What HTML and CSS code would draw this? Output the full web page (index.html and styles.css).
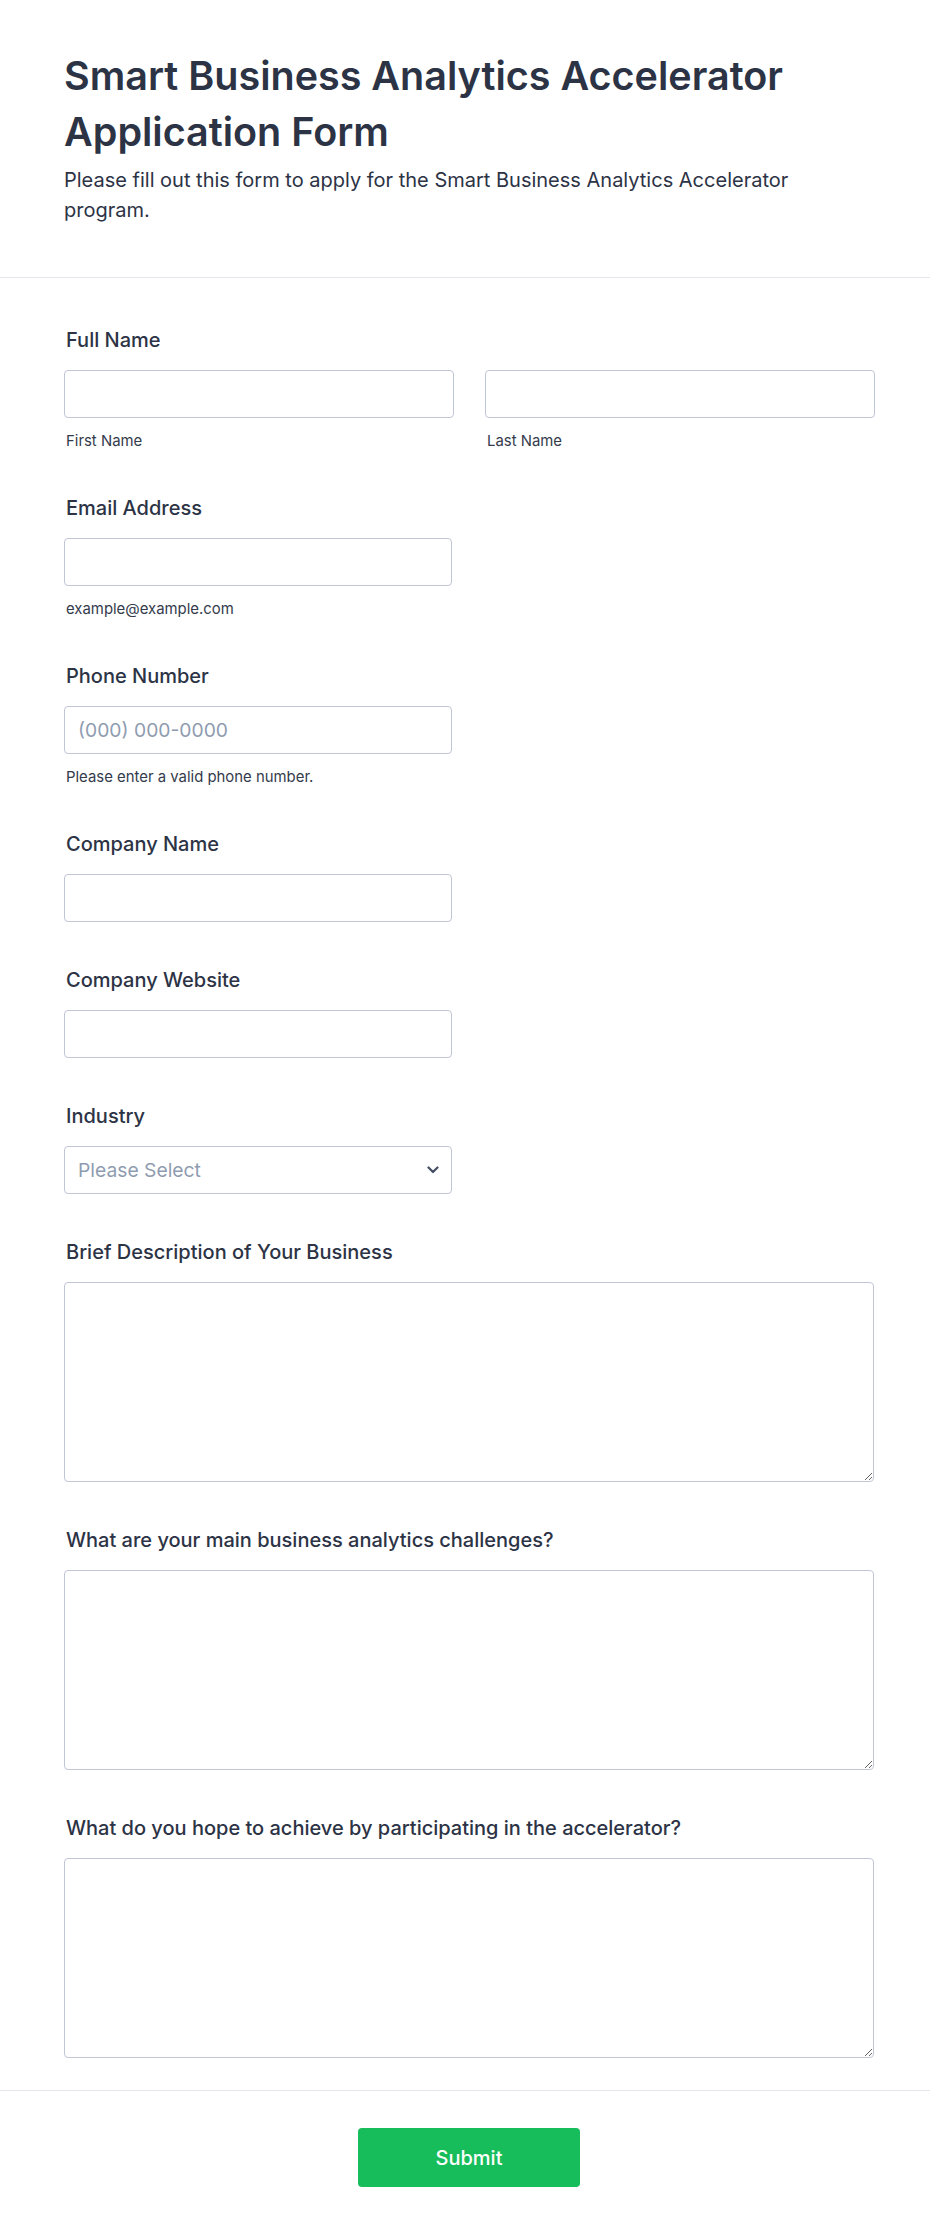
FILE: index.html
```html
<!DOCTYPE html>
<html lang="en">
<head>
<meta charset="utf-8">
<title>Smart Business Analytics Accelerator Application Form</title>
<link rel="stylesheet" href="styles.css">
</head>
<body>
<div class="page">
  <header class="header">
    <h1 class="title">Smart Business Analytics Accelerator Application Form</h1>
    <p class="subtitle">Please fill out this form to apply for the Smart Business Analytics Accelerator program.</p>
  </header>

  <form class="form">
    <div class="field">
      <label class="label">Full Name</label>
      <div class="name-grid">
        <div class="name-col">
          <input class="input" type="text">
          <span class="sublabel">First Name</span>
        </div>
        <div class="name-col">
          <input class="input" type="text">
          <span class="sublabel">Last Name</span>
        </div>
      </div>
    </div>

    <div class="field">
      <label class="label">Email Address</label>
      <input class="input input-short" type="email">
      <span class="sublabel">example@example.com</span>
    </div>

    <div class="field">
      <label class="label">Phone Number</label>
      <input class="input input-short" type="tel" placeholder="(000) 000-0000">
      <span class="sublabel">Please enter a valid phone number.</span>
    </div>

    <div class="field">
      <label class="label">Company Name</label>
      <input class="input input-short" type="text">
    </div>

    <div class="field">
      <label class="label">Company Website</label>
      <input class="input input-short" type="text">
    </div>

    <div class="field">
      <label class="label">Industry</label>
      <div class="select-wrap">
        <select class="input select">
          <option>Please Select</option>
        </select>
        <svg class="chevron" width="12" height="8" viewBox="0 0 12 8" aria-hidden="true">
          <path d="M1.5 1.5 L6 6 L10.5 1.5" fill="none" stroke="#454f63" stroke-width="2.2" stroke-linecap="round" stroke-linejoin="round"/>
        </svg>
      </div>
    </div>

    <div class="field">
      <label class="label">Brief Description of Your Business</label>
      <textarea class="input textarea"></textarea>
    </div>

    <div class="field">
      <label class="label">What are your main business analytics challenges?</label>
      <textarea class="input textarea"></textarea>
    </div>

    <div class="field">
      <label class="label">What do you hope to achieve by participating in the accelerator?</label>
      <textarea class="input textarea"></textarea>
    </div>
  </form>

  <footer class="footer">
    <button class="submit" type="button">Submit</button>
  </footer>
</div>
</body>
</html>
```

FILE: styles.css
```css
* {
  box-sizing: border-box;
}

html, body {
  margin: 0;
  padding: 0;
  background: #ffffff;
}

body {
  font-family: Inter, "Noto Sans", "DejaVu Sans", sans-serif;
  color: #2c3345;
}

.page {
  width: 930px;
}

.header {
  padding: 48px 64px 52px 64px;
  border-bottom: 1px solid #e3e6ec;
}

.title {
  margin: 0;
  max-width: 770px;
  font-size: 39.5px;
  line-height: 56px;
  font-weight: 600;
  color: #2c3345;
}

.subtitle {
  margin: 5px 0 0 0;
  max-width: 770px;
  font-size: 20px;
  line-height: 30px;
  font-weight: 400;
  color: #2c3345;
}

.form {
  width: 930px;
  padding: 32px 56px 4px 64px;
  display: flex;
  flex-direction: column;
  border-bottom: 1px solid #e3e6ec;
}

.field {
  padding: 16px 0 28px 0;
  display: flex;
  flex-direction: column;
  align-items: flex-start;
}

.label {
  display: block;
  margin: 0 0 16px 2px;
  font-size: 20px;
  line-height: 28px;
  font-weight: 500;
  color: #2c3345;
}

.name-grid {
  width: 810px;
  display: grid;
  grid-template-columns: 390px 390px;
  column-gap: 31px;
}

.name-col {
  display: flex;
  flex-direction: column;
}

.input {
  display: block;
  width: 100%;
  height: 48px;
  margin: 0;
  padding: 0 13px;
  border: 1px solid #c0c7d4;
  border-radius: 4px;
  background: #ffffff;
  font-family: Inter, "Noto Sans", sans-serif;
  font-size: 19.3px;
  color: #2c3345;
  outline: none;
}

.input::placeholder {
  color: #8f9cb0;
  opacity: 1;
}

.input-short {
  width: 388px;
}

.sublabel {
  display: block;
  margin: 14px 0 0 2px;
  font-size: 14.9px;
  line-height: 18px;
  font-weight: 400;
  color: #343b4c;
}

.select-wrap {
  position: relative;
  width: 388px;
}

.select {
  appearance: none;
  -webkit-appearance: none;
  color: #8f9cb0;
  padding-right: 40px;
}

.chevron {
  position: absolute;
  right: 13px;
  top: 20px;
  pointer-events: none;
}

.textarea {
  width: 810px;
  height: 200px;
  padding: 12px 13px;
  resize: both;
}

.footer {
  width: 874px;
  padding: 37px 0 50px 64px;
  display: flex;
  justify-content: center;
}

.submit {
  min-width: 222px;
  height: 59px;
  padding: 0 24px;
  border: none;
  border-radius: 4px;
  background: #18bd5b;
  color: #ffffff;
  font-family: Inter, "Noto Sans", sans-serif;
  font-size: 20px;
  font-weight: 500;
  cursor: pointer;
}
```
